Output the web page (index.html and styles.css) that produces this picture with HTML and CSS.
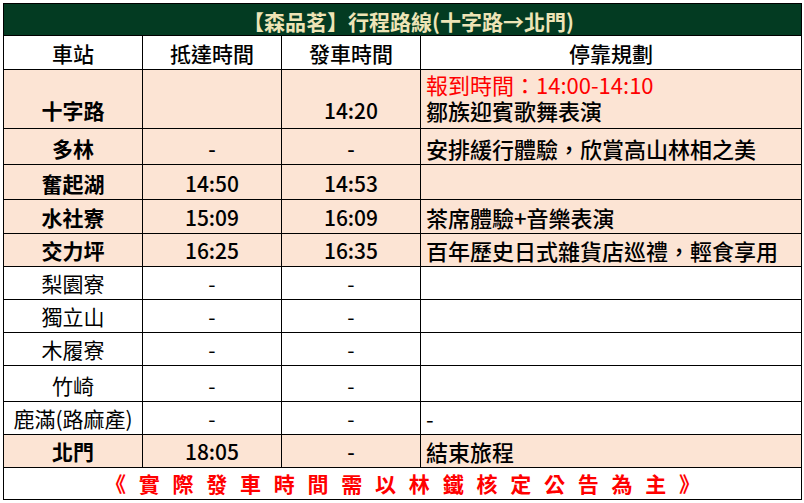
FILE: index.html
```html
<!DOCTYPE html>
<html lang="zh-Hant">
<head>
<meta charset="utf-8">
<title>行程路線</title>
<link rel="stylesheet" href="styles.css">
</head>
<body>
<div class="sheet">
  <div class="title">【森品茗】行程路線(十字路→北門)</div>

  <div class="cell head">車站</div>
  <div class="cell head">抵達時間</div>
  <div class="cell head">發車時間</div>
  <div class="cell head">停靠規劃</div>

  <div class="cell peach first station">十字路</div>
  <div class="cell peach first"></div>
  <div class="cell peach first time">14:20</div>
  <div class="cell peach first note multi"><span class="line red">報到時間：14:00-14:10</span><span class="line">鄒族迎賓歌舞表演</span></div>

  <div class="cell peach station">多林</div>
  <div class="cell peach time">-</div>
  <div class="cell peach time">-</div>
  <div class="cell peach note">安排緩行體驗，欣賞高山林相之美</div>

  <div class="cell peach station">奮起湖</div>
  <div class="cell peach time">14:50</div>
  <div class="cell peach time">14:53</div>
  <div class="cell peach note"></div>

  <div class="cell peach station">水社寮</div>
  <div class="cell peach time">15:09</div>
  <div class="cell peach time">16:09</div>
  <div class="cell peach note">茶席體驗+音樂表演</div>

  <div class="cell peach station">交力坪</div>
  <div class="cell peach time">16:25</div>
  <div class="cell peach time">16:35</div>
  <div class="cell peach note">百年歷史日式雜貨店巡禮，輕食享用</div>

  <div class="cell">梨園寮</div>
  <div class="cell">-</div>
  <div class="cell">-</div>
  <div class="cell note"></div>

  <div class="cell">獨立山</div>
  <div class="cell">-</div>
  <div class="cell">-</div>
  <div class="cell note"></div>

  <div class="cell">木履寮</div>
  <div class="cell">-</div>
  <div class="cell">-</div>
  <div class="cell note"></div>

  <div class="cell">竹崎</div>
  <div class="cell">-</div>
  <div class="cell">-</div>
  <div class="cell note"></div>

  <div class="cell">鹿滿(路麻產)</div>
  <div class="cell">-</div>
  <div class="cell">-</div>
  <div class="cell note">-</div>

  <div class="cell peach station">北門</div>
  <div class="cell peach time">18:05</div>
  <div class="cell peach time">-</div>
  <div class="cell peach note">結束旅程</div>

  <div class="footer">《 實 際 發 車 時 間 需 以 林 鐵 核 定 公 告 為 主 》</div>
</div>
</body>
</html>
```

FILE: styles.css
```css
html, body {
  margin: 0;
  background: #ffffff;
}

body {
  padding: 3px;
  font-family: "Noto Sans CJK TC", "Noto Sans", sans-serif;
  color: #000;
}

.sheet {
  display: grid;
  width: 799px;
  box-sizing: border-box;
  background: #000;
  padding: 1px;
  gap: 1px;
  grid-template-columns: 138px 138px 138px 380px;
  grid-template-rows: 31px 33px 58px 35px 34px 33px 32px 32px 32px 32px 35px 32px 32px 31px;
}

.title {
  grid-column: 1 / -1;
  background: #033b22;
  color: #ede4b6;
  font-weight: 700;
  font-size: 21px;
  line-height: 28px;
  display: flex;
  align-items: flex-end;
  justify-content: center;
  padding-left: 12px;
  white-space: nowrap;
}

.cell {
  background: #ffffff;
  font-size: 21px;
  line-height: 28px;
  display: flex;
  align-items: flex-end;
  justify-content: center;
  padding-bottom: 2px;
  box-sizing: border-box;
  white-space: nowrap;
}

.head {
  font-weight: 500;
}

.peach {
  background: #fce4d4;
}

.station {
  font-weight: 700;
}

.time {
  font-weight: 500;
}

.note {
  justify-content: flex-start;
  padding-left: 5px;
  font-size: 22px;
}

.peach.note {
  font-weight: 500;
}

.multi {
  flex-direction: column;
  align-items: flex-start;
  justify-content: flex-end;
  line-height: 26px;
}

.line {
  display: block;
  height: 26px;
}

.first {
  padding-bottom: 5px;
  line-height: 26px;
}

.red {
  color: #ff0000;
  font-weight: 400;
}

.footer {
  grid-column: 1 / -1;
  background: #ffffff;
  color: #ff0000;
  font-weight: 700;
  font-size: 21px;
  line-height: 28px;
  word-spacing: 8px;
  display: flex;
  align-items: flex-end;
  justify-content: center;
  padding-bottom: 2px;
  white-space: nowrap;
}
```
